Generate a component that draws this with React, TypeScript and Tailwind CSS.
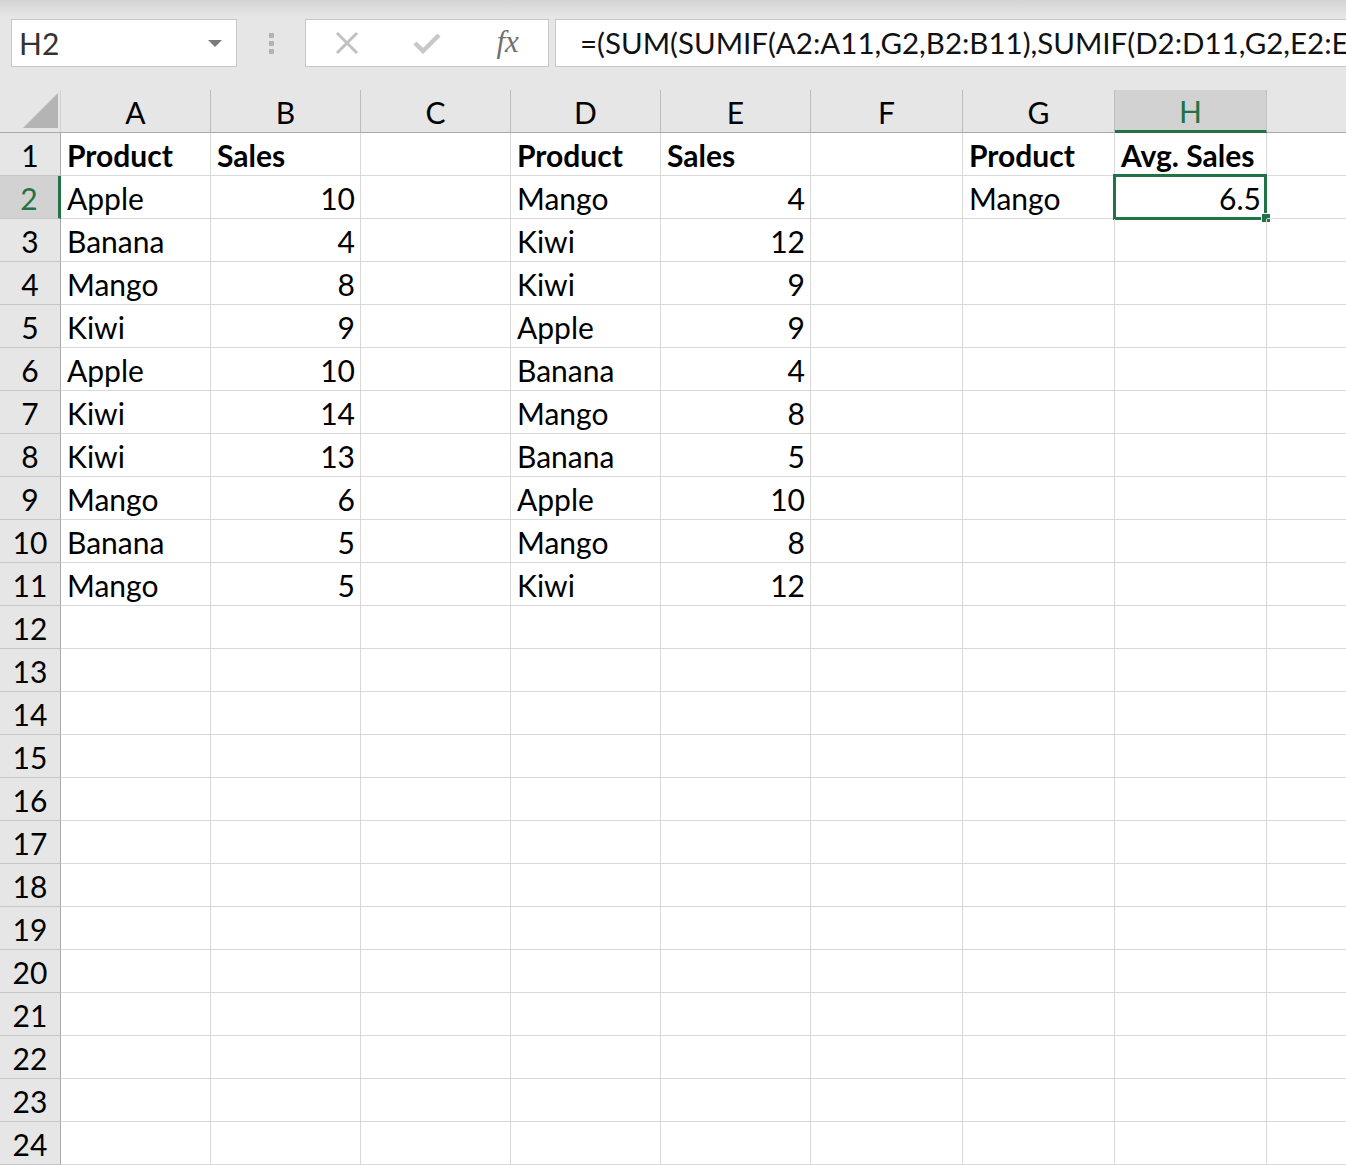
import React from 'react';

const cols = ['A', 'B', 'C', 'D', 'E', 'F', 'G', 'H', 'I'];
const widths = [150, 150, 150, 150, 150, 152, 152, 152, 200];

type Cell = { v: string; bold?: boolean; right?: boolean };

const left = [
  ['Apple', '10'],
  ['Banana', '4'],
  ['Mango', '8'],
  ['Kiwi', '9'],
  ['Apple', '10'],
  ['Kiwi', '14'],
  ['Kiwi', '13'],
  ['Mango', '6'],
  ['Banana', '5'],
  ['Mango', '5'],
];

const mid = [
  ['Mango', '4'],
  ['Kiwi', '12'],
  ['Kiwi', '9'],
  ['Apple', '9'],
  ['Banana', '4'],
  ['Mango', '8'],
  ['Banana', '5'],
  ['Apple', '10'],
  ['Mango', '8'],
  ['Kiwi', '12'],
];

function buildRows(): (Cell | null)[][] {
  const rows: (Cell | null)[][] = [];
  for (let r = 1; r <= 24; r++) {
    const row: (Cell | null)[] = Array(9).fill(null);
    if (r === 1) {
      row[0] = { v: 'Product', bold: true };
      row[1] = { v: 'Sales', bold: true };
      row[3] = { v: 'Product', bold: true };
      row[4] = { v: 'Sales', bold: true };
      row[6] = { v: 'Product', bold: true };
      row[7] = { v: 'Avg. Sales', bold: true };
    } else if (r <= 11) {
      const a = left[r - 2];
      const d = mid[r - 2];
      row[0] = { v: a[0] };
      row[1] = { v: a[1], right: true };
      row[3] = { v: d[0] };
      row[4] = { v: d[1], right: true };
      if (r === 2) {
        row[6] = { v: 'Mango' };
        row[7] = { v: '6.5', right: true };
      }
    }
    rows.push(row);
  }
  return rows;
}

const font = { fontFamily: 'Lato, "Open Sans", sans-serif' };

export default function App() {
  const rows = buildRows();
  return (
    <div className="w-[1346px] h-[1165px] overflow-hidden bg-white text-black" style={font}>
      {/* formula bar */}
      <div className="h-[90px] bg-gradient-to-b from-[#d3d3d3] via-[#e6e6e6] via-[18%] to-[#e6e6e6] flex items-start pt-[19px]">
        <div className="ml-[11px] w-[226px] h-[48px] bg-white border border-[#c6c6c6] flex items-center pl-[7px] pr-[14px]">
          <span className="text-[30px] text-[#333] flex-1 leading-none">H2</span>
          <span className="w-0 h-0 border-l-[7px] border-r-[7px] border-t-[7px] border-l-transparent border-r-transparent border-t-[#7a7a7a]" />
        </div>
        <div className="w-[68px] h-[48px] flex flex-col items-center justify-center gap-[3px]">
          <span className="w-[5px] h-[5px] bg-[#b3b3b3]" />
          <span className="w-[5px] h-[5px] bg-[#b3b3b3]" />
          <span className="w-[5px] h-[5px] bg-[#b3b3b3]" />
        </div>
        <div className="w-[244px] h-[48px] bg-white border border-[#c6c6c6] flex items-center">
          <div className="w-[81px] flex justify-center pl-[2px]">
            <svg width="24" height="24" viewBox="0 0 24 24">
              <path d="M2 2 L22 22 M22 2 L2 22" stroke="#c1c1c1" strokeWidth="3" />
            </svg>
          </div>
          <div className="w-[81px] flex justify-center">
            <svg width="28" height="22" viewBox="0 0 28 22">
              <path d="M2 11 L10 19 L26 3" stroke="#c8c8c8" strokeWidth="4.5" fill="none" />
            </svg>
          </div>
          <div className="w-[81px] flex justify-center">
            <span className="text-[31px] italic text-[#707070] leading-none -mt-[4px]" style={{ fontFamily: '"Liberation Serif", serif' }}>
              fx
            </span>
          </div>
        </div>
        <div className="ml-[6px] flex-1 h-[48px] bg-white border border-[#c6c6c6] border-r-0 flex items-center pl-[24px] overflow-hidden whitespace-nowrap">
          <span className="text-[29.5px] text-[#111] leading-none">
            =(SUM(SUMIF(A2:A11,G2,B2:B11),SUMIF(D2:D11,G2,E2:E11)))/(SUM(COUNTIF(A2:A11,G2),COUNTIF(D2:D11,G2)))
          </span>
        </div>
      </div>

      {/* column headers */}
      <div className="flex h-[43px] bg-[#e6e6e6] border-b border-[#ababab]">
        <div className="w-[61px] shrink-0 border-r border-[#d0d0d0] relative">
          <svg className="absolute left-[23px] top-[3px]" width="35" height="35" viewBox="0 0 35 35">
            <polygon points="35,0 35,35 0,35" fill="#b4b4b4" />
          </svg>
        </div>
        {cols.map((c, i) => {
          const sel = c === 'H';
          return (
            <div
              key={c}
              style={{ width: widths[i] }}
              className={`shrink-0 flex items-center justify-center text-[30px] pt-[3px] border-r ${
                sel
                  ? 'bg-[#d2d2d2] text-[#217346] border-[#c0c0c0] border-b-[3px] border-b-[#217346] -mb-[1px]'
                  : 'border-[#bcbcbc]'
              }`}
            >
              {c}
            </div>
          );
        })}
      </div>

      {/* grid */}
      {rows.map((row, ri) => {
        const r = ri + 1;
        const selRow = r === 2;
        return (
          <div key={r} className="flex h-[43px]">
            <div
              className={`w-[61px] shrink-0 flex items-end justify-center text-[30px] leading-[40px] border-b ${
                selRow
                  ? 'bg-[#d2d2d2] text-[#217346] border-b-[#c6c6c6] border-r-[3px] border-r-[#217346]'
                  : 'bg-[#e6e6e6] border-b-[#c6c6c6] border-r border-r-[#ababab]'
              }`}
            >
              {r}
            </div>
            {row.map((cell, ci) => {
              const isSel = r === 2 && ci === 7;
              return (
                <div
                  key={ci}
                  style={{ width: widths[ci] }}
                  className={`shrink-0 relative flex items-end px-[6px] border-r border-b border-[#d9d9d9] text-[30px] leading-[40px] whitespace-nowrap ${
                    cell?.right ? 'justify-end pr-[5px]' : ''
                  } ${cell?.bold ? 'font-bold' : ''}`}
                >
                  {cell?.v}
                  {isSel && (
                    <>
                      <span className="absolute -left-[2px] -top-[2px] -right-[1px] -bottom-[2px] border-[3px] border-[#217346] pointer-events-none" />
                      <span className="absolute -right-[5px] -bottom-[5px] w-[8px] h-[8px] bg-[#217346] border border-white box-content" />
                    </>
                  )}
                </div>
              );
            })}
          </div>
        );
      })}
    </div>
  );
}
